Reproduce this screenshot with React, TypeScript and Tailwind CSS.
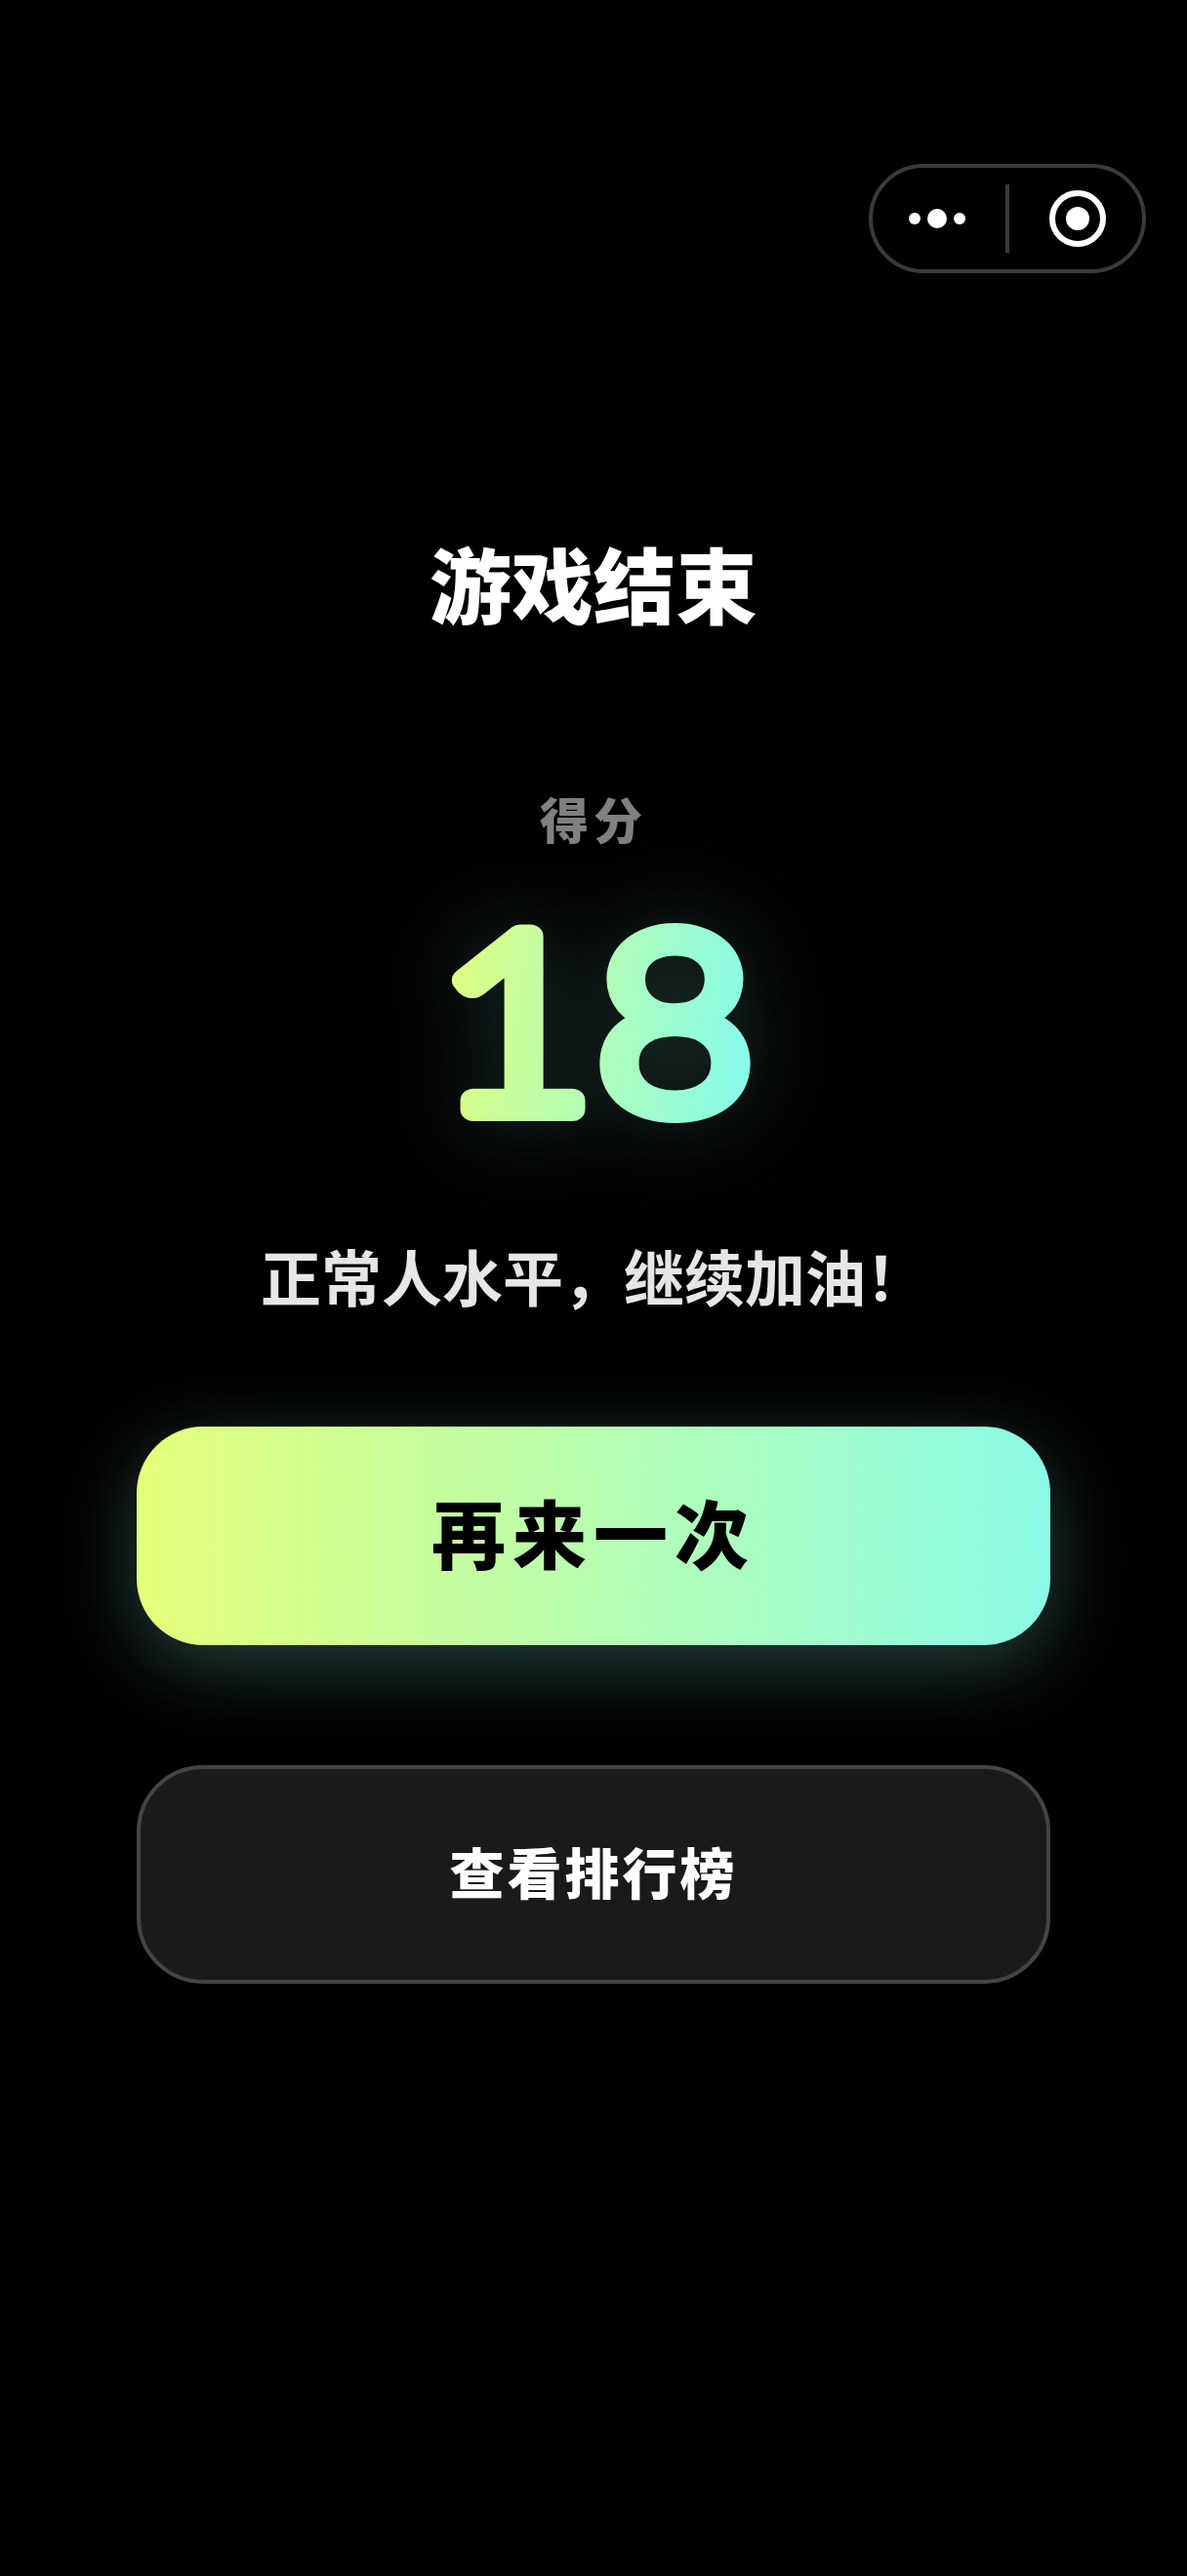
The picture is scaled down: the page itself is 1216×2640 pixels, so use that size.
const cjk = "font-['Inter','Noto_Sans_CJK_SC',sans-serif]";

function Capsule() {
  return (
    <div className="flex h-[112px] w-[284px] items-center rounded-full border-4 border-[#3a3a3a]">
      <div className="flex flex-1 items-center justify-center gap-[7px] pr-[4px]">
        <span className="h-3 w-3 rounded-full bg-white" />
        <span className="h-5 w-5 rounded-full bg-white" />
        <span className="h-3 w-3 rounded-full bg-white" />
      </div>
      <div className="h-[70px] w-1 bg-[#3a3a3a]" />
      <div className="flex flex-1 items-center justify-center pl-[4px]">
        <div className="flex h-[58px] w-[58px] items-center justify-center rounded-full border-[6px] border-white">
          <span className="h-6 w-6 rounded-full bg-white" />
        </div>
      </div>
    </div>
  );
}

// gradient numeral, svg text so the stroke can round off the corners
function Score({ value }: { value: number }) {
  return (
    <svg
      width="400"
      height="260"
      className="mt-[42px] overflow-visible [filter:drop-shadow(0_0_44px_rgba(138,251,230,0.22))]"
    >
      <defs>
        <linearGradient id="score" x1="0" y1="0" x2="1" y2="0.12">
          <stop offset="0" stopColor="#e4ff7a" />
          <stop offset="1" stopColor="#8afbe6" />
        </linearGradient>
      </defs>
      <text
        transform="translate(203 219) scale(1.11 1)"
        textAnchor="middle"
        fontFamily="Lato, sans-serif"
        fontWeight="300"
        fontSize="250"
        letterSpacing="2"
        fill="url(#score)"
        stroke="url(#score)"
        strokeWidth="24"
        strokeLinejoin="round"
      >
        {value}
      </text>
    </svg>
  );
}

export default function App() {
  return (
    <div className={`flex min-h-[2640px] w-[1216px] flex-col items-center bg-black ${cjk}`}>
      <div className="flex w-full justify-end pt-[168px] pr-[42px]">
        <Capsule />
      </div>

      <h1 className="mt-[267px] text-[84px] leading-[112px] font-black text-white">
        游戏结束
      </h1>

      <p className="mt-[149px] text-[50px] leading-[68px] font-black tracking-[5px] text-[#808080]">
        得分
      </p>

      <Score value={18} />

      <p className="mt-[94px] text-[62px] leading-[80px] font-bold text-[#e6e6e6]">
        正常人水平，继续加油！
      </p>

      <button className="mt-[110px] flex h-[224px] w-[936px] items-center justify-center rounded-[68px] bg-[linear-gradient(90deg,#e4ff7a,#8afbe6)] text-[76px] font-black tracking-[7px] text-black shadow-[0_20px_80px_rgba(138,251,230,0.27)]">
        再来一次
      </button>

      <button className="mt-[123px] flex h-[224px] w-[936px] items-center justify-center rounded-[68px] border-4 border-[#444444] bg-[#1a1a1a] text-[56px] font-black tracking-[3px] text-white">
        查看排行榜
      </button>
    </div>
  );
}
